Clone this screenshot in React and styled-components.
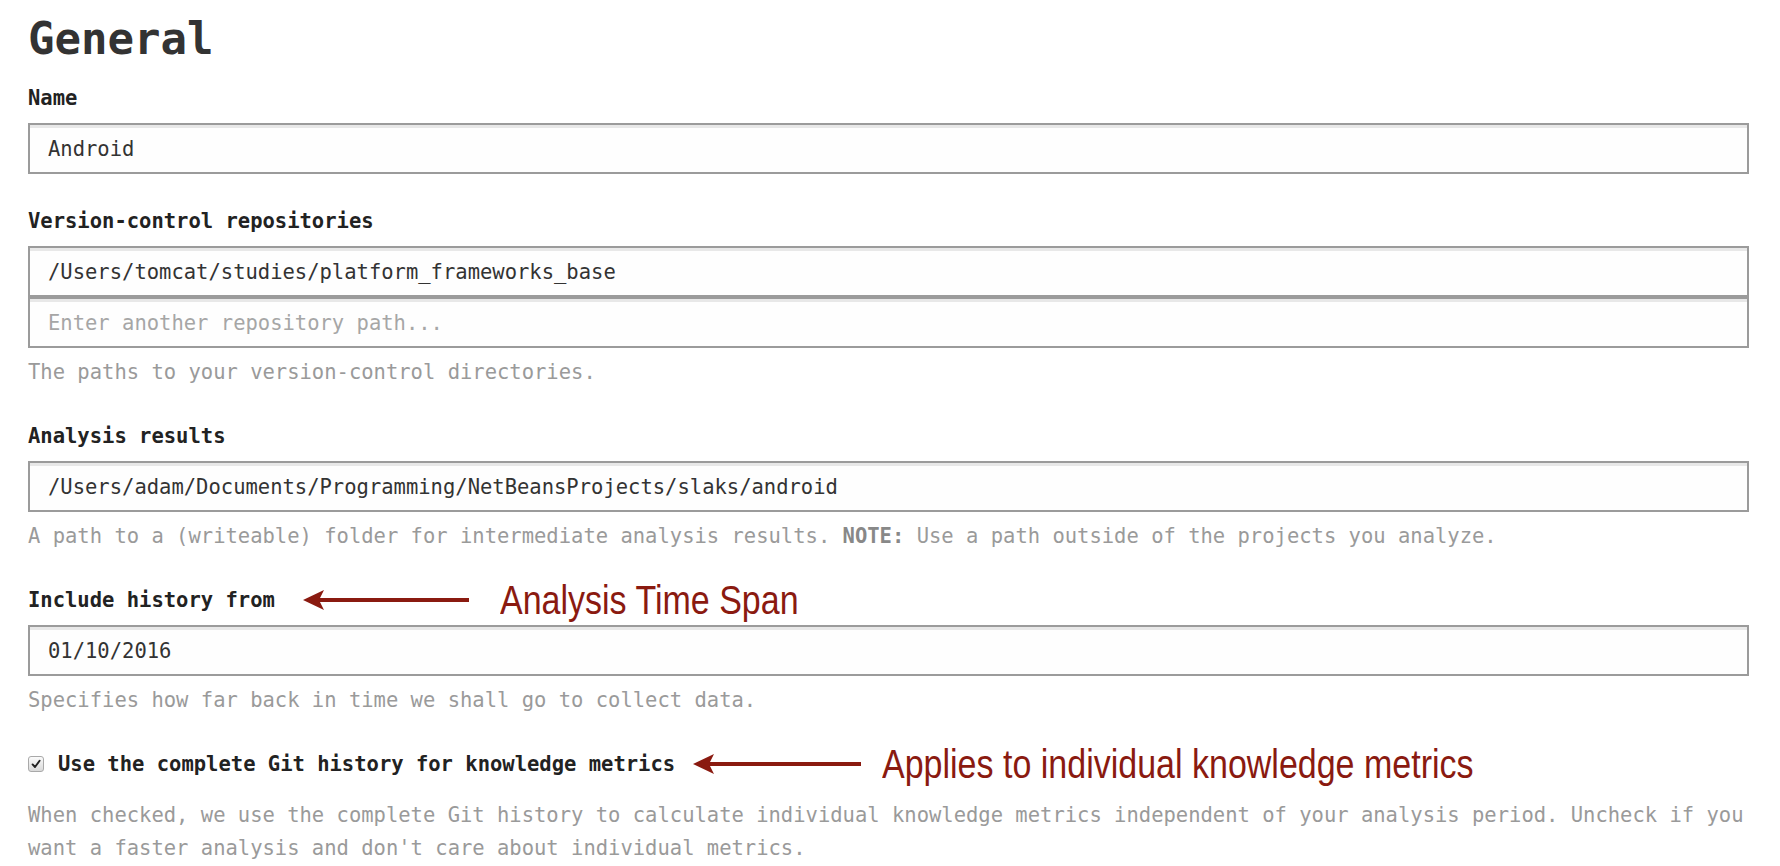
import React from 'react';
import styled, { createGlobalStyle } from 'styled-components';

const GlobalStyle = createGlobalStyle`
  html, body {
    margin: 0;
    padding: 0;
    background: #ffffff;
  }
  body {
    font-family: "DejaVu Sans Mono", "Liberation Mono", monospace;
    color: #333;
  }
`;

const Arrow = ({ width }) => (
  <svg width={width} height="20" viewBox={`0 0 ${width} 20`}>
    <line x1="14" y1="10" x2={width} y2="10" stroke="#8a1a10" strokeWidth="4" />
    <polygon points="0,10 21,0 16,10 21,20" fill="#8a1a10" />
  </svg>
);

const Annotation = ({ offset, arrowWidth, gap, children }) => (
  <Note $offset={offset} $gap={gap}>
    <Arrow width={arrowWidth} />
    <NoteText>{children}</NoteText>
  </Note>
);

const CheckMark = () => (
  <svg width="10" height="10" viewBox="0 0 10 10">
    <path d="M1.6 5.4 L4 8 L8.6 1.8" fill="none" stroke="#222" strokeWidth="1.9" strokeLinecap="round" strokeLinejoin="round" />
  </svg>
);

const App = () => {
  return (
    <Page>
      <GlobalStyle />
      <Title>General</Title>
      <Form>
        <Field>
          <LabelRow>
            <Label>Name</Label>
          </LabelRow>
          <Input readOnly value="Android" />
        </Field>

        <Field>
          <LabelRow>
            <Label>Version-control repositories</Label>
          </LabelRow>
          <InputStack>
            <Input readOnly value="/Users/tomcat/studies/platform_frameworks_base" />
            <Input placeholder="Enter another repository path..." />
          </InputStack>
          <Help>The paths to your version-control directories.</Help>
        </Field>

        <Field>
          <LabelRow>
            <Label>Analysis results</Label>
          </LabelRow>
          <Input readOnly value="/Users/adam/Documents/Programming/NetBeansProjects/slaks/android" />
          <Help>
            A path to a (writeable) folder for intermediate analysis results. <strong>NOTE:</strong> Use a path outside of the projects you analyze.
          </Help>
        </Field>

        <Field>
          <LabelRow>
            <Label>Include history from</Label>
            <Annotation offset={28} arrowWidth={166} gap={31}>Analysis Time Span</Annotation>
          </LabelRow>
          <Input readOnly value="01/10/2016" />
          <Help>Specifies how far back in time we shall go to collect data.</Help>
        </Field>

        <Field>
          <LabelRow>
            <Checkbox>
              <CheckMark />
            </Checkbox>
            <Label>Use the complete Git history for knowledge metrics</Label>
            <Annotation offset={18} arrowWidth={168} gap={21}>Applies to individual knowledge metrics</Annotation>
          </LabelRow>
          <Help $spaced>
            When checked, we use the complete Git history to calculate individual knowledge metrics independent of your analysis period. Uncheck if you want a faster analysis and don't care about individual metrics.
          </Help>
        </Field>
      </Form>
    </Page>
  );
};

const Page = styled.div`
  padding: 14px 31px 0 28px;
`;

const Title = styled.h1`
  margin: 0 0 21px;
  font-size: 44px;
  line-height: 50px;
  font-weight: bold;
  color: #333;
`;

const Form = styled.form`
  display: flex;
  flex-direction: column;
  gap: 34px;
`;

const Field = styled.div`
  display: flex;
  flex-direction: column;
`;

const LabelRow = styled.div`
  display: flex;
  align-items: center;
  height: 26px;
  margin-bottom: 12px;
`;

const Label = styled.label`
  font-size: 20.5px;
  line-height: 26px;
  font-weight: bold;
  color: #222;
  white-space: nowrap;
`;

const InputStack = styled.div`
  display: flex;
  flex-direction: column;
`;

const Input = styled.input`
  box-sizing: border-box;
  width: 100%;
  height: 51px;
  margin: 0;
  padding: 0 18px;
  border: 2px solid #9b9b9b;
  border-radius: 0;
  background: #fefefe;
  box-shadow: inset 0 3px 0 #e8e8e8;
  font-family: "DejaVu Sans Mono", "Liberation Mono", monospace;
  font-size: 20.5px;
  color: #333;
  outline: none;

  &::placeholder {
    color: #a6a6a6;
  }
`;

const Help = styled.p`
  margin: ${(p) => (p.$spaced ? '10px' : '8px')} 0 0;
  font-size: 20.5px;
  line-height: 33px;
  color: #9a9a9a;

  strong {
    color: #888;
  }
`;

const Checkbox = styled.span`
  box-sizing: border-box;
  display: inline-flex;
  align-items: center;
  justify-content: center;
  width: 16px;
  height: 16px;
  margin-right: 14px;
  border: 1px solid #a9a9a9;
  border-radius: 3px;
  background: linear-gradient(#fbfbfb, #d9d9d9);
`;

const Note = styled.div`
  display: flex;
  align-items: center;
  gap: ${(p) => p.$gap}px;
  margin-left: ${(p) => p.$offset}px;
`;

const NoteText = styled.span`
  display: inline-block;
  font-family: "Liberation Sans", Arial, sans-serif;
  font-size: 40px;
  line-height: 26px;
  color: #8a1a10;
  white-space: nowrap;
  transform: scaleX(0.85);
  transform-origin: left center;
`;

export default App;
